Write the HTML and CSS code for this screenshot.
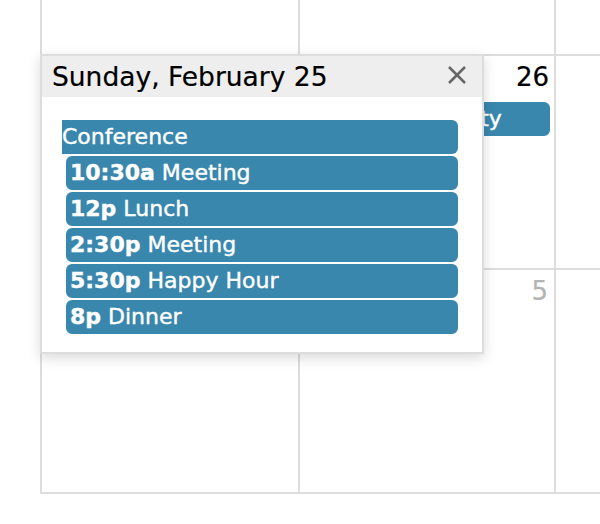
FILE: index.html
```html
<!DOCTYPE html>
<html>
<head>
<meta charset="utf-8">
<link rel="stylesheet" href="styles.css">
</head>
<body>
<div class="calendar">
  <div class="cell"></div>
  <div class="cell"></div>
  <div class="cell"></div>

  <div class="cell"></div>
  <div class="cell">
    <div class="day-num">26</div>
    <div class="event"><b>7a</b> Birthday Party</div>
  </div>
  <div class="cell"></div>

  <div class="cell"></div>
  <div class="cell"><div class="day-num other">5</div></div>
  <div class="cell"></div>

  <div class="popover">
    <div class="popover-header">
      <span class="title">Sunday, February 25</span>
      <svg class="close" width="20" height="20" viewBox="0 0 20 20" aria-label="close">
        <line x1="2" y1="2" x2="18" y2="18"/>
        <line x1="18" y1="2" x2="2" y2="18"/>
      </svg>
    </div>
    <div class="popover-body">
      <div class="event not-start">Conference</div>
      <div class="event"><b>10:30a</b> Meeting</div>
      <div class="event"><b>12p</b> Lunch</div>
      <div class="event"><b>2:30p</b> Meeting</div>
      <div class="event"><b>5:30p</b> Happy Hour</div>
      <div class="event"><b>8p</b> Dinner</div>
    </div>
  </div>
</div>
</body>
</html>
```
FILE: styles.css
```css
* { box-sizing: border-box; }
html, body {
  margin: 0;
  background: #fff;
  overflow: hidden;
}
body {
  font-family: "DejaVu Sans", "Liberation Sans", sans-serif;
  color: #000;
}
.calendar {
  position: relative;
  margin-left: 40px;
  width: 560px;
  display: grid;
  grid-template-columns: 258px 256px 1fr;
  grid-template-rows: 56px 214px 224px;
}
.cell {
  border-left: 2px solid #ddd;
  border-bottom: 2px solid #ddd;
  min-width: 0;
}
.day-num {
  text-align: right;
  font-size: 26px;
  line-height: 30px;
  padding: 6px 5px 0 0;
  -webkit-text-stroke: 0.2px #000;
}
.day-num.other {
  color: #b3b3b3;
  -webkit-text-stroke: 0.2px #b3b3b3;
  padding-right: 6px;
}
.event {
  background: #3a87ad;
  border: 2px solid #3a87ad;
  border-radius: 6px;
  color: #fff;
  font-size: 22px;
  line-height: 30px;
  padding: 0 2px;
  margin: 2px 4px 0;
  white-space: nowrap;
  overflow: hidden;
  -webkit-text-stroke: 0.4px #fff;
}
.cell .event { margin-top: 10px; }
.event b { font-weight: bold; }
.event.not-start {
  margin-left: 0;
  border-left-width: 0;
  border-radius: 0 6px 6px 0;
  padding-left: 0;
}
.popover {
  position: absolute;
  left: 0;
  top: 54px;
  width: 444px;
  border: 2px solid #ddd;
  background: #fff;
  box-shadow: 0 4px 12px rgba(0, 0, 0, 0.15);
}
.popover-header {
  background: #eee;
  display: flex;
  justify-content: space-between;
  align-items: center;
  padding: 6px 15px 5px 10px;
}
.title {
  font-size: 26.5px;
  line-height: 30px;
  -webkit-text-stroke: 0.2px #000;
}
.close {
  margin-bottom: 4px;
  stroke: #666;
  stroke-width: 2.5;
}
.popover-body {
  padding: 21px 20px 18px;
}
```
